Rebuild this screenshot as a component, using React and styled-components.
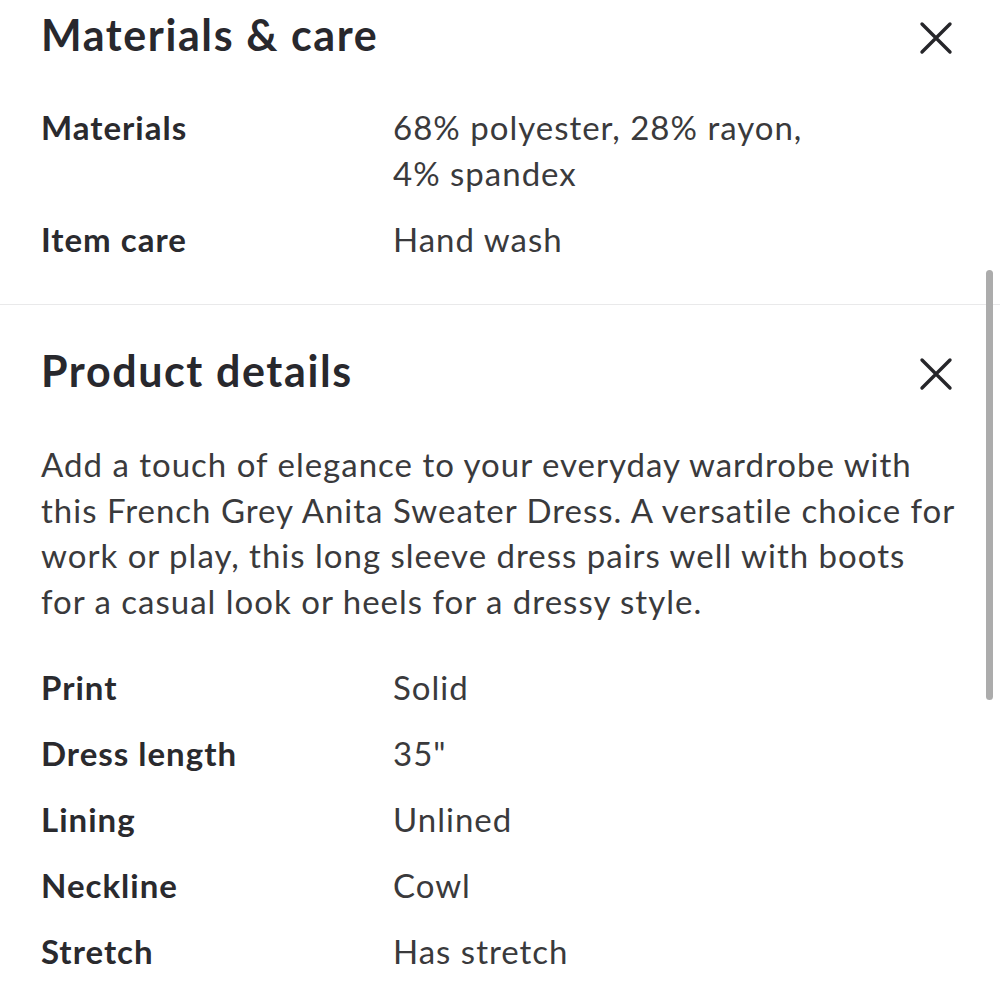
import React from "react";
import styled, { createGlobalStyle } from "styled-components";

const Global = createGlobalStyle`
  html, body { margin: 0; padding: 0; background: #ffffff; }
  body { font-family: Lato, "Open Sans", "Liberation Sans", sans-serif; }
`;

const Page = styled.div`
  position: relative;
  width: 1000px;
  height: 1000px;
  overflow: hidden;
  background: #fff;
  display: flex;
  flex-direction: column;
`;

const Section = styled.section`
  padding: ${(p) => p.$top}px 30px ${(p) => p.$bottom}px 41px;
  border-bottom: ${(p) => (p.$divider ? "1px solid #e9e9ea" : "none")};
`;

const Header = styled.div`
  display: flex;
  justify-content: space-between;
  align-items: center;
  height: 52px;
  padding-right: 17px;
`;

const Title = styled.h2`
  margin: 0;
  font-size: 43px;
  line-height: 52px;
  font-weight: 700;
  letter-spacing: 1.6px;
  color: #28282d;
`;

const CloseButton = styled.button`
  border: 0;
  background: transparent;
  padding: 0;
  margin-top: 6px;
  width: 34px;
  height: 34px;
  display: flex;
  align-items: center;
  justify-content: center;
  color: #26262a;
`;

const Specs = styled.dl`
  display: grid;
  grid-template-columns: 352px 1fr;
  row-gap: 20px;
  margin: ${(p) => p.$top}px 0 0 0;
  font-size: 33px;
  line-height: 46px;
  letter-spacing: 1px;
`;

const Label = styled.dt`
  margin: 0;
  font-weight: 700;
  color: #2a2a2e;
`;

const Value = styled.dd`
  margin: 0;
  font-weight: 400;
  color: #3a3a3c;
`;

const Description = styled.p`
  margin: 45px 0 0 0;
  font-size: 33px;
  line-height: 45.5px;
  letter-spacing: 1px;
  white-space: nowrap;
  color: #3a3a3c;
`;

const Scrollbar = styled.div`
  position: absolute;
  left: 986px;
  top: 270px;
  width: 7px;
  height: 430px;
  border-radius: 4px;
  background: #acacac;
`;

const CloseIcon = () => (
  <svg width="34" height="34" viewBox="0 0 34 34" fill="none">
    <path d="M3 3 L31 31 M31 3 L3 31" stroke="currentColor" strokeWidth="3.4" strokeLinecap="round" />
  </svg>
);

const details = [
  ["Print", "Solid"],
  ["Dress length", '35"'],
  ["Lining", "Unlined"],
  ["Neckline", "Cowl"],
  ["Stretch", "Has stretch"],
];

const descriptionLines = [
  "Add a touch of elegance to your everyday wardrobe with",
  "this French Grey Anita Sweater Dress. A versatile choice for",
  "work or play, this long sleeve dress pairs well with boots",
  "for a casual look or heels for a dressy style.",
];

export default function App() {
  return (
    <>
      <Global />
      <Page>
        <Section $top={9} $bottom={42} $divider>
          <Header>
            <Title>Materials &amp; care</Title>
            <CloseButton aria-label="Close"><CloseIcon /></CloseButton>
          </Header>
          <Specs $top={43}>
            <Label>Materials</Label>
            <Value>68% polyester, 28% rayon,<br />4% spandex</Value>
            <Label>Item care</Label>
            <Value>Hand wash</Value>
          </Specs>
        </Section>
        <Section $top={40} $bottom={0}>
          <Header>
            <Title>Product details</Title>
            <CloseButton aria-label="Close"><CloseIcon /></CloseButton>
          </Header>
          <Description>
            {descriptionLines.map((line, i) => (
              <React.Fragment key={i}>
                {line}
                {i < descriptionLines.length - 1 && <br />}
              </React.Fragment>
            ))}
          </Description>
          <Specs $top={40}>
            {details.map(([k, v]) => (
              <React.Fragment key={k}>
                <Label>{k}</Label>
                <Value>{v}</Value>
              </React.Fragment>
            ))}
          </Specs>
        </Section>
        <Scrollbar />
      </Page>
    </>
  );
}
